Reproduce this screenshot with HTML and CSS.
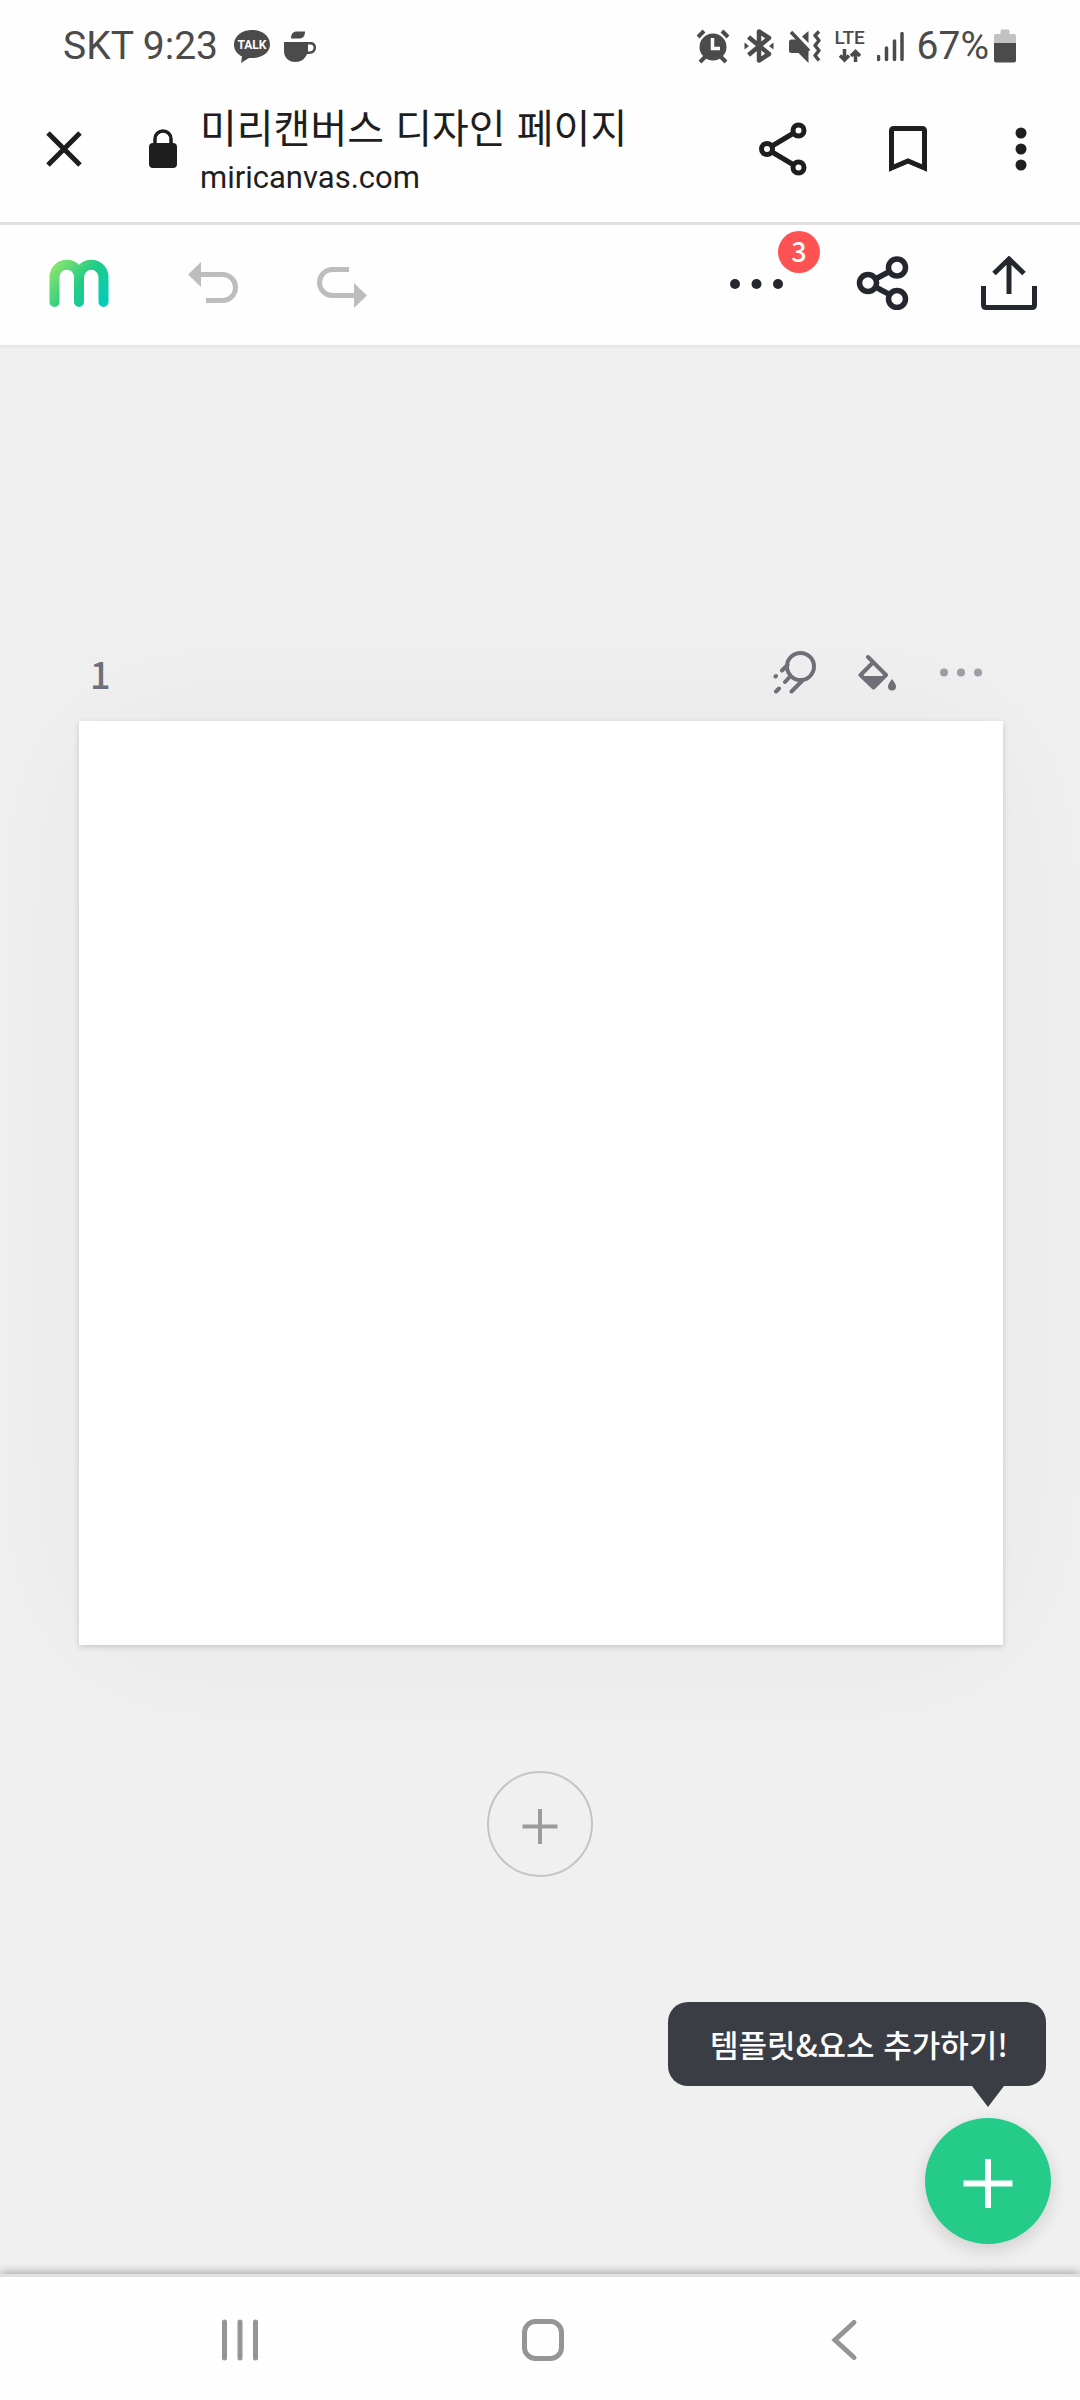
FILE: index.html
```html
<!DOCTYPE html>
<html lang="ko">
<head>
<meta charset="utf-8">
<meta name="viewport" content="width=device-width, initial-scale=1">
<title>미리캔버스 디자인 페이지</title>
<link rel="stylesheet" href="styles.css">
</head>
<body>
<div class="status">
  <span class="status-text">SKT 9:23</span>
  <svg class="talk" width="36" height="34" viewBox="0 0 36 34"><path fill="currentColor" d="M18 1C8 1 0 7 0 15.500c0 5.500 3 9.500 8 12L7 34l8-5c12 1 21-5 21-13.500C36 7 28 1 18 1z"/><text x="18" y="20" text-anchor="middle" class="talk-label">TALK</text></svg>
  <svg class="cup" width="32" height="34" viewBox="0 0 32 34"><path fill="currentColor" d="M7 9.500C7 5 9 2.500 13 2.500h8C21 7 19 9.500 15 9.500z"/><path fill="currentColor" fill-rule="evenodd" d="M0 13h26c4 0 6 2 6 5.500S30 25 25 25h-2c-2 5-6 8-11.500 8C4 33 0 28 0 22zM24 15.500v7h1c3 0 4.500-1.500 4.500-4S28 15.500 24 15.500z"/></svg>
  <div class="status-icons">
    <svg width="36" height="36" viewBox="0 0 36 36"><circle cx="18" cy="19" r="13.500" fill="currentColor"/><path d="M3 9l6-6M33 9l-6-6M5 34l6-6M31 34l-6-6" stroke="currentColor" stroke-width="4"/><path d="M17.500 10v10.500H25" fill="none" stroke="#fefefe" stroke-width="3.500"/></svg>
    <svg width="36" height="36" viewBox="0 0 36 36"><path d="M7.500 9L28 26l-10 6.500V3.500L28 10 7.500 27" fill="none" stroke="currentColor" stroke-width="4.500" stroke-linejoin="round"/><path d="M3.500 14.500l4.500 3.500-4.500 3.500zM32.500 14.500L28 18l4.500 3.500z" fill="currentColor"/></svg>
    <svg width="36" height="36" viewBox="0 0 36 36"><path d="M2 14q0-2.500 2.500-2.500h5L21.500 24v11L11.500 25h-7Q2 25 2 22.500zM21.500 3v12L15 8.500z" fill="currentColor"/><path d="M4 4l18 19" stroke="currentColor" stroke-width="3.500"/><path d="M32 3.500l-4 4 4 5-4 5 4 5-4 5 4 5" fill="none" stroke="currentColor" stroke-width="3.500" stroke-linejoin="round"/></svg>
    <div class="lte"><span>LTE</span>
      <svg width="24" height="14" viewBox="0 0 24 14"><path d="M6.500 0v10M2 6.500l4.500 4.500L11 6.500M17.500 13V3M13 7l4.500-4.500L22 7" fill="none" stroke="currentColor" stroke-width="3.500"/></svg></div>
    <svg width="28" height="32" viewBox="0 0 28 32"><path d="M1.500 26.500v3M9.500 18v11.500M17.500 11v18.500M25 3.500v26" stroke="currentColor" stroke-width="3.500" stroke-linecap="round"/></svg>
  </div>
  <span class="status-text battery-text">67%</span>
  <svg width="22" height="34" viewBox="0 0 22 34"><path d="M6.500 5V2q0-1.500 1.500-1.500h6q1.500 0 1.500 1.500v3H20q2 0 2 2v8H0V7q0-2 2-2z" fill="#c2c2c2"/><path d="M0 14h22v17.500q0 2-2 2H2q-2 0-2-2z" fill="currentColor"/></svg>
</div>

<header class="browser-bar">
  <button class="icon-btn" aria-label="닫기"><svg width="36" height="36" viewBox="0 0 36 36"><path d="M2 2l32 32M34 2L2 34" stroke="currentColor" stroke-width="5"/></svg></button>
  <svg class="lock" width="30" height="40" viewBox="0 0 30 40"><rect x="1" y="14" width="28" height="25" rx="4" fill="currentColor"/><path d="M7 15V10a8 8 0 0 1 16 0v5" fill="none" stroke="currentColor" stroke-width="3.500"/></svg>
  <div class="site">
    <h1 class="site-title">미리캔버스 디자인 페이지</h1>
    <span class="site-url">miricanvas.com</span>
  </div>
  <div class="browser-actions">
    <button class="icon-btn" aria-label="공유"><svg width="48" height="54" viewBox="0 0 48 54"><g fill="none" stroke="currentColor" stroke-width="5"><path d="M8 27L39 8.500M8 27l31 18.500"/><g fill="#fefefe"><circle cx="8" cy="27" r="5.500"/><circle cx="39.500" cy="8.500" r="5.500"/><circle cx="39.500" cy="45.500" r="5.500"/></g></g></svg></button>
    <button class="icon-btn" aria-label="북마크"><svg width="48" height="48" viewBox="0 0 48 48"><path d="M7.500 43V6q0-2.500 2.500-2.500h28q2.500 0 2.500 2.500v37L24 36z" fill="none" stroke="currentColor" stroke-width="5"/></svg></button>
    <button class="icon-btn" aria-label="더보기"><svg width="24" height="48" viewBox="0 0 24 48"><g fill="currentColor"><circle cx="12" cy="8" r="5.500"/><circle cx="12" cy="24" r="5.500"/><circle cx="12" cy="40" r="5.500"/></g></svg></button>
  </div>
</header>

<nav class="editor-bar">
  <a class="logo" href="#" aria-label="미리캔버스"><svg width="60" height="54" viewBox="0 0 60 54"><defs><linearGradient id="brand" gradientUnits="userSpaceOnUse" x1="6" y1="6" x2="58" y2="48"><stop offset="0" stop-color="#8ce66c"/><stop offset=".5" stop-color="#22cb87"/><stop offset="1" stop-color="#00cdbf"/></linearGradient></defs><path d="M5.500 46V21a12 12 0 0 1 24.500 0V46M30 21a12 12 0 0 1 24.500 0V46" fill="none" stroke="url(#brand)" stroke-width="10" stroke-linecap="round"/></svg></a>
  <button class="icon-btn muted" aria-label="실행 취소"><svg width="50" height="54" viewBox="0 0 50 54"><path d="M12 18.500H34.500a13 13 0 0 1 0 26H18" fill="none" stroke="currentColor" stroke-width="5"/><path d="M0 18.500L13 6v25z" fill="currentColor"/></svg></button>
  <button class="icon-btn muted" aria-label="다시 실행"><svg width="50" height="54" viewBox="0 0 50 54"><path d="M32 13.500H15.500a13 13 0 0 0 0 26H38" fill="none" stroke="currentColor" stroke-width="5"/><path d="M50 39.500L37 27v25z" fill="currentColor"/></svg></button>
  <div class="editor-actions">
    <button class="icon-btn more" aria-label="알림 3개"><svg width="54" height="54" viewBox="0 0 54 54"><g fill="currentColor"><circle cx="6" cy="28" r="5"/><circle cx="27.500" cy="28" r="5"/><circle cx="49" cy="28" r="5"/></g></svg><span class="badge">3</span></button>
    <button class="icon-btn" aria-label="공유하기"><svg width="54" height="54" viewBox="0 0 54 54"><g fill="none" stroke="currentColor" stroke-width="5.500"><path d="M13 27L42 11.500M13 27l29 15.500"/><g fill="#fefefe"><circle cx="13" cy="27" r="8.500"/><circle cx="42" cy="11.500" r="8.500"/><circle cx="42" cy="43" r="8.500"/></g></g></svg></button>
    <button class="icon-btn" aria-label="내보내기"><svg width="56" height="54" viewBox="0 0 56 54"><path d="M2.500 30v19q0 2.500 2.500 2.500h46q2.500 0 2.500-2.500V30M28 38V4M13 17.500L28 3l15 14.500" fill="none" stroke="currentColor" stroke-width="5"/></svg></button>
  </div>
</nav>

<main class="workspace">
  <section class="page">
    <div class="page-head">
      <span class="page-number">1</span>
      <div class="page-tools">
        <button class="icon-btn" aria-label="애니메이션"><svg width="44" height="44" viewBox="0 0 44 44"><g fill="none" stroke="currentColor" stroke-width="4" stroke-linecap="round"><circle cx="27.500" cy="15.500" r="13.500"/><path d="M14.500 14L9 19.500M17.500 25L12 31M29 30L18.500 40.500M2.500 25.500l.5-.5M3 40.500L6 37.500"/></g></svg></button>
        <button class="icon-btn" aria-label="배경색"><svg width="40" height="44" viewBox="0 0 40 44"><path d="M10 6l18 18-12.500 12.500L2.500 24 15 11.500" fill="none" stroke="currentColor" stroke-width="4" stroke-linecap="round" stroke-linejoin="round"/><path d="M2.500 25h26l-13 13zM34 28q4 5 4 7.500a4 4 0 0 1-8 0Q30 33 34 28z" fill="currentColor"/></svg></button>
        <button class="icon-btn faint" aria-label="페이지 메뉴"><svg width="44" height="44" viewBox="0 0 44 44"><g fill="currentColor"><circle cx="5" cy="21.500" r="4"/><circle cx="22" cy="21.500" r="4"/><circle cx="39" cy="21.500" r="4"/></g></svg></button>
      </div>
    </div>
    <div class="canvas"></div>
  </section>
  <button class="add-page" aria-label="페이지 추가"><svg width="40" height="40" viewBox="0 0 40 40"><path d="M20 5v35M2.500 22.500h35" stroke="currentColor" stroke-width="4"/></svg></button>
  <div class="create">
    <div class="tooltip" id="create-tip">템플릿&amp;요소 추가하기!</div>
    <button class="fab" aria-label="추가" aria-describedby="create-tip"><svg width="54" height="54" viewBox="0 0 54 54"><path d="M27 5v49M2.500 29.500h49" stroke="currentColor" stroke-width="6"/></svg></button>
  </div>
</main>

<footer class="system-nav">
  <button class="icon-btn" aria-label="최근 앱"><svg width="48" height="48" viewBox="0 0 48 48"><path d="M8.500 6v36M24 6v36M39.500 6v36" stroke="currentColor" stroke-width="5" stroke-linecap="round"/></svg></button>
  <button class="icon-btn" aria-label="홈"><svg width="48" height="48" viewBox="0 0 48 48"><rect x="5.500" y="5.500" width="37" height="37" rx="11" fill="none" stroke="currentColor" stroke-width="5"/></svg></button>
  <button class="icon-btn" aria-label="뒤로"><svg width="48" height="48" viewBox="0 0 48 48"><path d="M33 6.500L14 24l19 17.500" fill="none" stroke="currentColor" stroke-width="5" stroke-linecap="round"/></svg></button>
</footer>
</body>
</html>
```
FILE: styles.css
```css
* { box-sizing: border-box; }

body {
  margin: 0;
  min-height: 100vh;
  display: flex;
  flex-direction: column;
  background: #fefefe;
  color: #1e1e1e;
  font-family: Roboto, "Noto Sans CJK KR", sans-serif;
}

svg { display: block; flex: none; }

.icon-btn {
  display: block;
  flex: none;
  padding: 0;
  border: 0;
  background: none;
  color: inherit;
  cursor: pointer;
}

/* Phone status bar */
.status {
  display: flex;
  align-items: center;
  height: 76px;
  padding: 16px 64px 0 63px;
  color: #4b4b4b;
}
.status-text { font-size: 39px; line-height: 48px; }
.talk { margin-left: 16px; }
.talk-label { fill: #fefefe; font: 700 12px Roboto, sans-serif; }
.cup { margin-left: 14px; }
.status-icons {
  display: flex;
  align-items: center;
  gap: 10px;
  margin-left: auto;
}
.lte {
  display: flex;
  flex-direction: column;
  align-items: center;
  gap: 3px;
  width: 34px;
  font-size: 19px;
  font-weight: 500;
  line-height: 17px;
}
.battery-text { margin: 0 5px 0 12px; }

/* Browser bar */
.browser-bar {
  display: flex;
  align-items: center;
  height: 149px;
  padding: 0 47px 0 46px;
  border-bottom: 3px solid #e0e0e0;
}
.lock { margin: 0 22px 0 66px; }
.site {
  display: flex;
  flex-direction: column;
  gap: 4px;
  padding-top: 2px;
}
.site-title {
  margin: 0;
  font: 400 40px/52px "Noto Sans CJK KR", sans-serif;
}
.site-url { font-size: 31px; line-height: 44px; }
.browser-actions {
  display: flex;
  align-items: center;
  gap: 77px;
  margin-left: auto;
}

/* Editor toolbar */
.editor-bar {
  display: flex;
  align-items: center;
  gap: 79px;
  height: 123px;
  padding: 0 43px 4px 49px;
  border-bottom: 3px solid #e8e8e8;
  color: #24272e;
}
.muted { color: #bcbdbf; }
.editor-actions {
  display: flex;
  gap: 72px;
  margin-left: auto;
}
.more { position: relative; }
.badge {
  position: absolute;
  left: 49px;
  top: -25px;
  width: 42px;
  height: 42px;
  border-radius: 50%;
  background: #ff5353;
  color: #fefefe;
  font: 500 27px/40px "Noto Sans CJK KR", sans-serif;
}

/* Design workspace */
.workspace {
  flex: 1;
  display: flex;
  flex-direction: column;
  padding: 293px 0 30px;
  background: #f0f0f0;
}
.page { padding: 0 77px 0 79px; }
.page-head {
  display: flex;
  align-items: center;
  justify-content: space-between;
  height: 64px;
  margin-bottom: 16px;
  padding: 0 20px 0 11px;
  color: #6f7077;
}
.page-number { font: 500 36px/64px "Noto Sans CJK KR", sans-serif; }
.page-tools { display: flex; gap: 41px; }
.faint { color: #9d9da5; }
.canvas {
  aspect-ratio: 1;
  background: #fff;
  box-shadow: 0 2px 6px rgba(0, 0, 0, .16), 0 0 160px rgba(0, 0, 0, .04);
}
.add-page {
  display: flex;
  align-items: center;
  justify-content: center;
  align-self: center;
  width: 106px;
  height: 106px;
  margin-top: 126px;
  padding: 0;
  border: 2px solid #c5c5c5;
  border-radius: 50%;
  background: none;
  color: #9b9b9b;
}
.create {
  display: flex;
  flex-direction: column;
  align-items: flex-end;
  gap: 32px;
  margin-top: auto;
  padding: 40px 29px 0;
}
.tooltip {
  position: relative;
  margin-right: 5px;
  padding: 20px 38px 20px 42px;
  border-radius: 20px;
  background: #3b3d45;
  color: #fefefe;
  font: 500 31px/44px "Noto Sans CJK KR", sans-serif;
}
.tooltip::after {
  content: "";
  position: absolute;
  right: 42px;
  top: 100%;
  border: 16px solid transparent;
  border-top: 21px solid #3b3d45;
  border-bottom: 0;
}
.fab {
  display: flex;
  align-items: center;
  justify-content: center;
  width: 126px;
  height: 126px;
  padding: 0;
  border: 0;
  border-radius: 50%;
  background: #25cc89;
  color: #fefefe;
  box-shadow: 0 6px 18px rgba(0, 0, 0, .14);
}

/* Phone navigation bar */
.system-nav {
  position: relative;
  display: flex;
  align-items: center;
  justify-content: space-between;
  height: 126px;
  padding: 2px 211px 0 216px;
  border-top: 3px solid #e0e0e0;
  color: #959595;
  box-shadow: 0 -2px 9px rgba(0, 0, 0, .3);
}
```
